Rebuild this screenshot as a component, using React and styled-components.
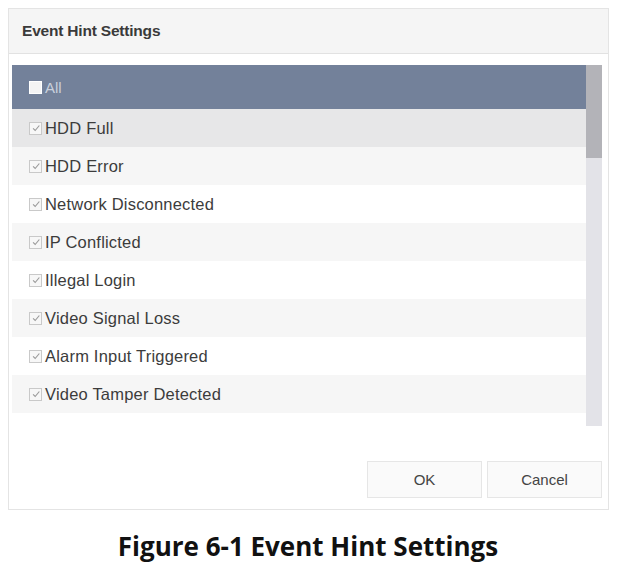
import React from "react";
import styled, { createGlobalStyle } from "styled-components";

const GlobalStyle = createGlobalStyle`
  html, body {
    margin: 0;
    padding: 0;
    background: #ffffff;
  }
  body {
    font-family: "Liberation Sans", Arial, sans-serif;
  }
`;

const events = [
  { label: "HDD Full", tone: "hover" },
  { label: "HDD Error", tone: "odd" },
  { label: "Network Disconnected", tone: "even" },
  { label: "IP Conflicted", tone: "odd" },
  { label: "Illegal Login", tone: "even" },
  { label: "Video Signal Loss", tone: "odd" },
  { label: "Alarm Input Triggered", tone: "even" },
  { label: "Video Tamper Detected", tone: "odd" },
];

const rowColors = {
  hover: "#e7e7e8",
  odd: "#f6f6f6",
  even: "#ffffff",
};

function Check() {
  return (
    <Box>
      <Tick viewBox="0 0 12 12">
        <path d="M2.5 6.5 L5 9 L10 3" />
      </Tick>
    </Box>
  );
}

export default function App() {
  return (
    <Page>
      <GlobalStyle />
      <Dialog>
        <Header>Event Hint Settings</Header>
        <Body>
          <ListFrame>
            <List>
              <AllRow>
                <Box $light />
                <AllLabel>All</AllLabel>
              </AllRow>
              {events.map((e) => (
                <Row key={e.label} $tone={e.tone}>
                  <Check />
                  <Label>{e.label}</Label>
                </Row>
              ))}
              <Row $tone="even">
                <Check />
              </Row>
            </List>
            <Scrollbar>
              <Thumb />
            </Scrollbar>
          </ListFrame>
          <Footer>
            <Button>OK</Button>
            <Button>Cancel</Button>
          </Footer>
        </Body>
      </Dialog>
      <Caption>Figure 6-1 Event Hint Settings</Caption>
    </Page>
  );
}

const Page = styled.div`
  width: 620px;
  height: 574px;
  padding: 8px 10px 0 8px;
  box-sizing: border-box;
  display: flex;
  flex-direction: column;
`;

const Dialog = styled.div`
  width: 601px;
  height: 502px;
  border: 1px solid #e4e4e4;
  box-sizing: border-box;
  background: #ffffff;
  display: flex;
  flex-direction: column;
`;

const Header = styled.div`
  height: 44px;
  background: #f5f5f5;
  border-bottom: 1px solid #e2e2e2;
  display: flex;
  align-items: center;
  padding-left: 13px;
  font-size: 15.5px;
  font-weight: bold;
  color: #3a3a3a;
  letter-spacing: -0.2px;
  flex-shrink: 0;
`;

const Body = styled.div`
  flex: 1;
  display: flex;
  flex-direction: column;
  padding: 11px 6px 0 3px;
`;

const ListFrame = styled.div`
  height: 361px;
  display: flex;
  overflow: hidden;
`;

const List = styled.div`
  flex: 1;
  display: flex;
  flex-direction: column;
  overflow: hidden;
`;

const AllRow = styled.div`
  height: 44px;
  flex-shrink: 0;
  background: #73819a;
  display: flex;
  align-items: center;
  padding-left: 17px;
`;

const Row = styled.div`
  height: 38px;
  flex-shrink: 0;
  background: ${(p) => rowColors[p.$tone]};
  display: flex;
  align-items: center;
  padding-left: 17px;
`;

const Box = styled.span`
  width: 13px;
  height: 13px;
  box-sizing: border-box;
  border: 1px solid ${(p) => (p.$light ? "#ffffff" : "#c9c9c9")};
  background: ${(p) => (p.$light ? "#f4f4f4" : "#f7f7f7")};
  display: inline-flex;
  align-items: center;
  justify-content: center;
  margin-right: 3px;
  flex-shrink: 0;
`;

const Tick = styled.svg`
  width: 10px;
  height: 10px;
  fill: none;
  stroke: #9a9a9a;
  stroke-width: 1.4;
`;

const AllLabel = styled.span`
  font-size: 15px;
  color: #c9d0dc;
`;

const Label = styled.span`
  font-size: 16.5px;
  color: #3c3c3c;
  letter-spacing: 0.2px;
`;

const Scrollbar = styled.div`
  width: 16px;
  background: #e3e3e8;
  display: flex;
  flex-direction: column;
  flex-shrink: 0;
`;

const Thumb = styled.div`
  height: 93px;
  background: #b3b3b8;
`;

const Footer = styled.div`
  display: flex;
  justify-content: flex-end;
  gap: 5px;
  padding-top: 35px;
  padding-right: 0;
`;

const Button = styled.div`
  width: 115px;
  height: 37px;
  box-sizing: border-box;
  border: 1px solid #e6e6e6;
  background: #fafafa;
  display: flex;
  align-items: center;
  justify-content: center;
  font-size: 15px;
  color: #444;
`;

const Caption = styled.div`
  margin-top: 18px;
  text-align: center;
  font-family: "Open Sans", "Noto Sans", sans-serif;
  font-weight: bold;
  font-size: 26px;
  color: #111;
  padding-right: 2px;
`;
